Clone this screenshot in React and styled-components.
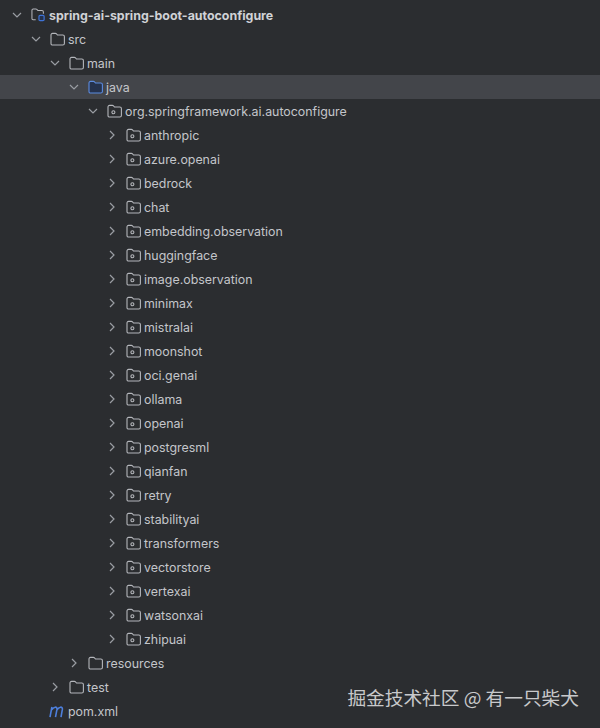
import React from "react";
import styled, { createGlobalStyle } from "styled-components";

const Global = createGlobalStyle`
  html, body { margin: 0; padding: 0; background: #2b2d30; }
  #root { width: 600px; height: 728px; overflow: hidden; }
`;

const Panel = styled.div`
  position: relative;
  width: 600px;
  height: 728px;
  box-sizing: border-box;
  padding-top: 3px;
  background: #2b2d30;
  font-family: Inter, "Noto Sans", sans-serif;
  font-size: 12.4px;
  color: #c4c6cb;
  overflow: hidden;
`;

const Row = styled.div`
  display: flex;
  align-items: center;
  height: 24px;
  padding-left: ${(p) => p.$level * 19 + 12}px;
  background: ${(p) => (p.$active ? "#43454a" : "transparent")};
`;

const ChevronSlot = styled.span`
  display: flex;
  align-items: center;
  justify-content: center;
  width: 10px;
  height: 24px;
  margin-right: 9px;
  color: #9a9da3;
`;

const IconSlot = styled.span`
  display: flex;
  align-items: center;
  width: 15px;
  height: 24px;
  margin-right: 3px;
  flex: none;
`;

const Label = styled.span`
  font-weight: ${(p) => (p.$bold ? 700 : 400)};
  color: ${(p) => (p.$bold ? "#d0d2d6" : "#c4c6cb")};
  white-space: nowrap;
  line-height: 25px;
`;

const Watermark = styled.div`
  position: absolute;
  right: 21px;
  top: 685px;
  font-family: "Noto Sans CJK SC", sans-serif;
  font-size: 18.7px;
  line-height: 24px;
  color: #c8c9cb;
  white-space: nowrap;
`;

const MavenMark = styled.svg`
  flex: none;
  margin-left: -1px;
  margin-top: 1px;
`;

const Chevron = ({ open }) => (
  <svg width="10" height="10" viewBox="0 0 10 10" fill="none" stroke="currentColor" strokeWidth="1.2">
    {open ? <path d="M1 3l4 4 4-4" /> : <path d="M3 1l4 4-4 4" />}
  </svg>
);

const Folder = ({ color = "#b4b6bb", fill = "none" }) => (
  <svg width="15" height="14" viewBox="0 0 15 14" fill={fill} stroke={color} strokeWidth="1.1">
    <path d="M1 3c0-1 .6-1.6 1.6-1.6h2.8c.5 0 .8.2 1.1.5l1 1.1h5.3c.9 0 1.6.6 1.6 1.5v6.9c0 1-.7 1.6-1.6 1.6H2.6c-1 0-1.6-.6-1.6-1.6z" />
  </svg>
);

const Pkg = () => (
  <svg width="15" height="14" viewBox="0 0 15 14" fill="none" stroke="#b4b6bb" strokeWidth="1.1">
    <path d="M1 3c0-1 .6-1.6 1.6-1.6h2.8c.5 0 .8.2 1.1.5l1 1.1h5.3c.9 0 1.6.6 1.6 1.5v6.9c0 1-.7 1.6-1.6 1.6H2.6c-1 0-1.6-.6-1.6-1.6z" />
    <circle cx="6.4" cy="8.2" r="1.5" />
  </svg>
);

const Module = () => (
  <svg width="16" height="16" viewBox="0 0 16 16" fill="none">
    <path d="M5 13H2.2C1.4 13 1 12.5 1 11.8V3c0-.9.5-1.4 1.4-1.4h2.8c.5 0 .8.2 1.1.5l1 1.1h4.4c.9 0 1.5.6 1.5 1.5v2" stroke="#b4b6bb" strokeWidth="1.1" />
    <rect x="8.5" y="8.5" width="5.5" height="5.5" rx="1.2" fill="#25324d" stroke="#3f73d6" strokeWidth="1.3" />
  </svg>
);

const Maven = () => (
  <MavenMark width="17" height="13" viewBox="0 0 17 13" fill="none" stroke="#4d7fdc" strokeWidth="1.6">
    <path d="M1 12.2L2.9 2M2.7 4.8C4.6 1.6 8.300 1.200 8 4.200L6.500 12.200M8 4.800C9.800 1.600 13.700 1.200 13.400 4.200L12 12.200" />
  </MavenMark>
);

const packages = [
  "anthropic", "azure.openai", "bedrock", "chat", "embedding.observation", "huggingface",
  "image.observation", "minimax", "mistralai", "moonshot", "oci.genai", "ollama", "openai",
  "postgresml", "qianfan", "retry", "stabilityai", "transformers", "vectorstore", "vertexai",
  "watsonxai", "zhipuai",
];

const TreeRow = ({ level, state, icon, label, bold, active }) => (
  <Row $level={level} $active={active}>
    <ChevronSlot>{state && <Chevron open={state === "open"} />}</ChevronSlot>
    <IconSlot>{icon}</IconSlot>
    <Label $bold={bold}>{label}</Label>
  </Row>
);

export default function App() {
  return (
    <Panel>
      <Global />
      <TreeRow level={0} state="open" icon={<Module />} label="spring-ai-spring-boot-autoconfigure" bold />
      <TreeRow level={1} state="open" icon={<Folder />} label="src" />
      <TreeRow level={2} state="open" icon={<Folder />} label="main" />
      <TreeRow level={3} state="open" icon={<Folder color="#5b8be0" fill="#25324d" />} label="java" active />
      <TreeRow level={4} state="open" icon={<Pkg />} label="org.springframework.ai.autoconfigure" />
      {packages.map((name) => (
        <TreeRow key={name} level={5} state="closed" icon={<Pkg />} label={name} />
      ))}
      <TreeRow level={3} state="closed" icon={<Folder />} label="resources" />
      <TreeRow level={2} state="closed" icon={<Folder />} label="test" />
      <TreeRow level={1} icon={<Maven />} label="pom.xml" />
      <Watermark>掘金技术社区 @ 有一只柴犬</Watermark>
    </Panel>
  );
}
